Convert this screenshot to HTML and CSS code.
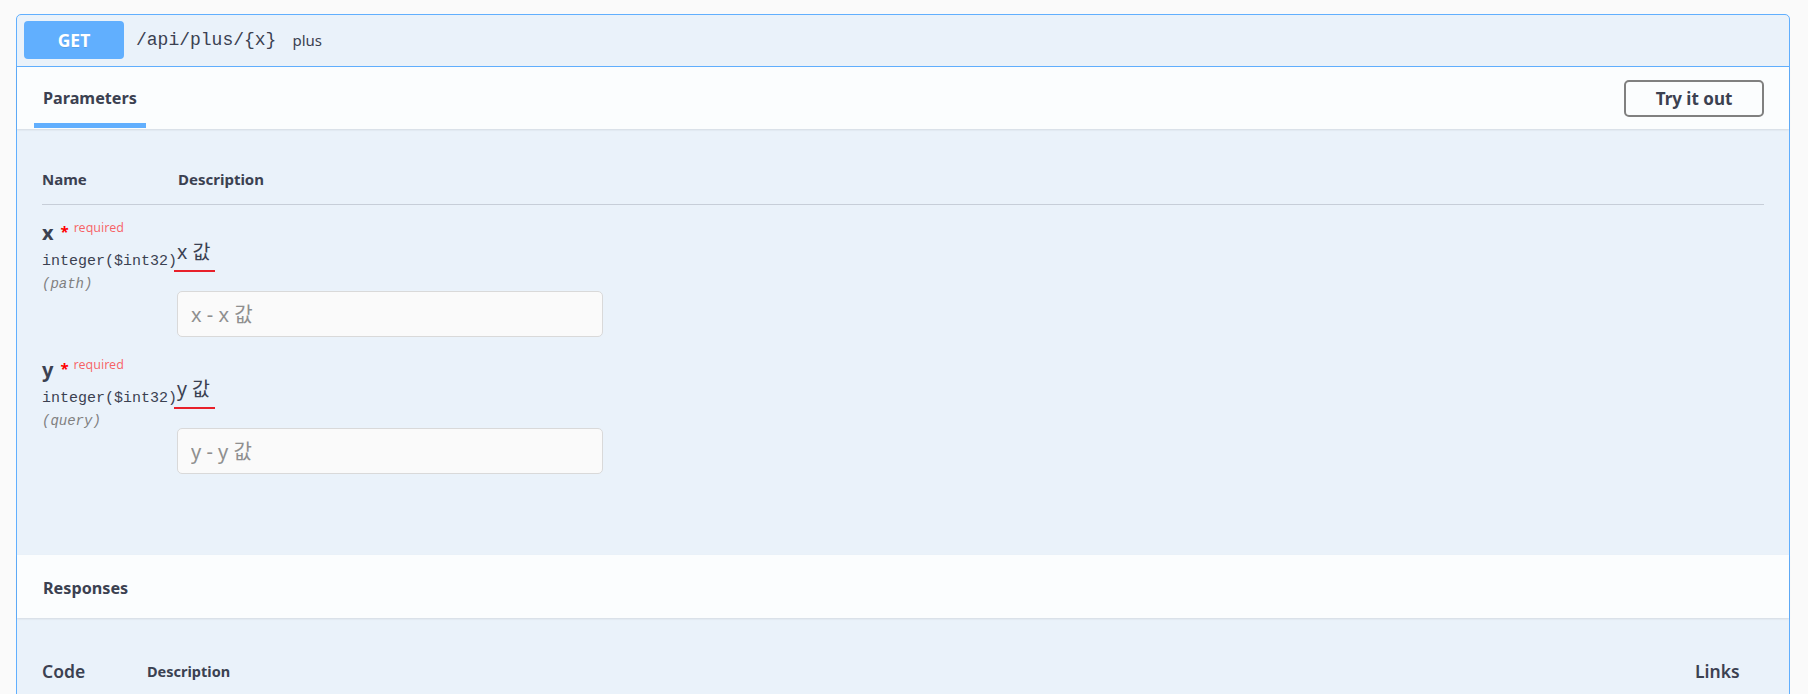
FILE: index.html
```html
<!DOCTYPE html>
<html lang="ko">
<head>
<meta charset="utf-8">
<title>Swagger - plus</title>
<link rel="stylesheet" href="styles.css">
</head>
<body>
<div class="page">
  <div class="opblock">
    <div class="summary">
      <span class="method">GET</span>
      <span class="path">/api/plus/{x}</span>
      <span class="summary-desc">plus</span>
    </div>
    <div class="section-header">
      <div class="tab"><h4 class="tab-title">Parameters</h4></div>
      <button class="btn">Try it out</button>
    </div>
    <div class="params">
      <div class="params-head">
        <div class="col-name">Name</div>
        <div class="col-desc">Description</div>
      </div>
      <div class="param-row">
        <div class="pname">
          <div class="pname-title">x<span class="star">*</span><span class="req">required</span></div>
          <div class="ptype">integer($int32)</div>
          <div class="pin">(path)</div>
        </div>
        <div class="pdesc">
          <div class="markdown"><span class="mark">x 값</span></div>
          <input class="pinput" type="text" placeholder="x - x 값">
        </div>
      </div>
      <div class="param-row">
        <div class="pname">
          <div class="pname-title">y<span class="star">*</span><span class="req">required</span></div>
          <div class="ptype">integer($int32)</div>
          <div class="pin">(query)</div>
        </div>
        <div class="pdesc">
          <div class="markdown"><span class="mark">y 값</span></div>
          <input class="pinput" type="text" placeholder="y - y 값">
        </div>
      </div>
    </div>
    <div class="section-header resp-header">
      <h4 class="resp-title">Responses</h4>
    </div>
    <div class="responses">
      <div class="resp-head">
        <div class="c-code">Code</div>
        <div class="c-desc">Description</div>
        <div class="c-links">Links</div>
      </div>
    </div>
  </div>
</div>
</body>
</html>
```

FILE: styles.css
```css
html, body {
  margin: 0;
  padding: 0;
  background: #fafafa;
}
body {
  font-family: "Noto Sans", "Noto Sans CJK KR", sans-serif;
  color: #3b4151;
  height: 694px;
  overflow: hidden;
}
.page {
  padding: 14px 18px 0 16px;
}
.opblock {
  border: 1px solid #61affe;
  border-radius: 5px;
  background: rgba(97, 175, 254, 0.1);
  min-height: 720px;
}
.summary {
  display: flex;
  align-items: center;
  padding: 6px 7px 7px;
  border-bottom: 1px solid #61affe;
}
.method {
  width: 100px;
  height: 38px;
  display: flex;
  align-items: center;
  justify-content: center;
  background: #61affe;
  border-radius: 4px;
  color: #fff;
  font-weight: 700;
  font-size: 17.5px;
  text-shadow: 0 1px 0 rgba(0, 0, 0, 0.1);
}
.path {
  margin-left: 12px;
  font-family: "Liberation Mono", monospace;
  font-size: 18px;
  color: #3b4151;
}
.summary-desc {
  margin-left: 16px;
  font-size: 15px;
  color: #3b4151;
}
.section-header {
  display: flex;
  align-items: center;
  justify-content: space-between;
  height: 62px;
  padding: 0 25px 0 17px;
  background: rgba(255, 255, 255, 0.8);
  box-shadow: 0 1px 2px rgba(0, 0, 0, 0.1);
}
.resp-header {
  padding-left: 26px;
  padding-top: 2px;
  box-sizing: border-box;
  height: 63px;
}
.tab {
  align-self: stretch;
  display: flex;
  align-items: center;
  padding: 6px 9px 0;
  border-bottom: 5px solid #61affe;
  margin-bottom: 1px;
}
.tab-title, .resp-title {
  margin: 0;
  font-size: 16.2px;
  font-weight: 700;
  color: #3b4151;
}
.btn {
  width: 140px;
  height: 37px;
  border: 2px solid #808080;
  border-radius: 5px;
  background: transparent;
  font-family: "Noto Sans", sans-serif;
  font-size: 17px;
  font-weight: 700;
  color: #3b4151;
  padding: 0;
}
.params {
  padding: 25px 25px 76px;
}
.params-head {
  display: grid;
  grid-template-columns: 136px 1fr;
  padding: 15px 0;
  line-height: 20px;
  font-size: 15px;
  font-weight: 700;
  border-bottom: 1px solid rgba(59, 65, 81, 0.2);
}
.param-row {
  display: grid;
  grid-template-columns: 136px 1fr;
  padding: 13px 0 5px;
}
.pname {
  white-space: nowrap;
}
.pname-title {
  font-size: 20px;
  font-weight: 700;
  line-height: 30px;
}
.star {
  color: red;
  font-size: 15px;
  font-weight: 700;
  margin-left: 7px;
  position: relative;
  top: -3px;
}
.req {
  color: rgba(255, 0, 0, 0.6);
  font-size: 12.5px;
  font-weight: 400;
  margin-left: 5px;
  position: relative;
  top: -8px;
}
.ptype {
  font-family: "Liberation Mono", monospace;
  font-size: 15px;
  line-height: 22px;
  color: #3b4151;
}
.pin {
  font-family: "Liberation Mono", monospace;
  font-size: 14px;
  font-style: italic;
  line-height: 22px;
  color: #808080;
}
.pdesc {
  display: flex;
  flex-direction: column;
  align-items: flex-start;
}
.markdown {
  margin-top: 22px;
  font-size: 19.5px;
  line-height: 24px;
}
.mark {
  display: inline-block;
  line-height: 24px;
  padding: 0 5px 6px 3px;
  margin-left: -4px;
  border-bottom: 2px solid #e8202a;
}
.pinput {
  box-sizing: border-box;
  margin-top: 19px;
  margin-left: -1px;
  width: 426px;
  height: 46px;
  padding: 0 13px;
  border: 1px solid #d9d9d9;
  border-radius: 5px;
  background: #fafafa;
  font-family: "Noto Sans", "Noto Sans CJK KR", sans-serif;
  font-size: 20px;
  color: #3b4151;
}
.pinput::placeholder {
  color: #8f8f8f;
}
.responses {
  padding: 27px 25px 0;
}
.resp-head {
  display: grid;
  grid-template-columns: 105px 1fr 69px;
  align-items: center;
  padding: 15px 0;
  line-height: 22px;
}
.c-code, .c-links {
  font-size: 17.5px;
  font-weight: 600;
}
.c-desc {
  font-size: 14.5px;
  font-weight: 700;
}
```
